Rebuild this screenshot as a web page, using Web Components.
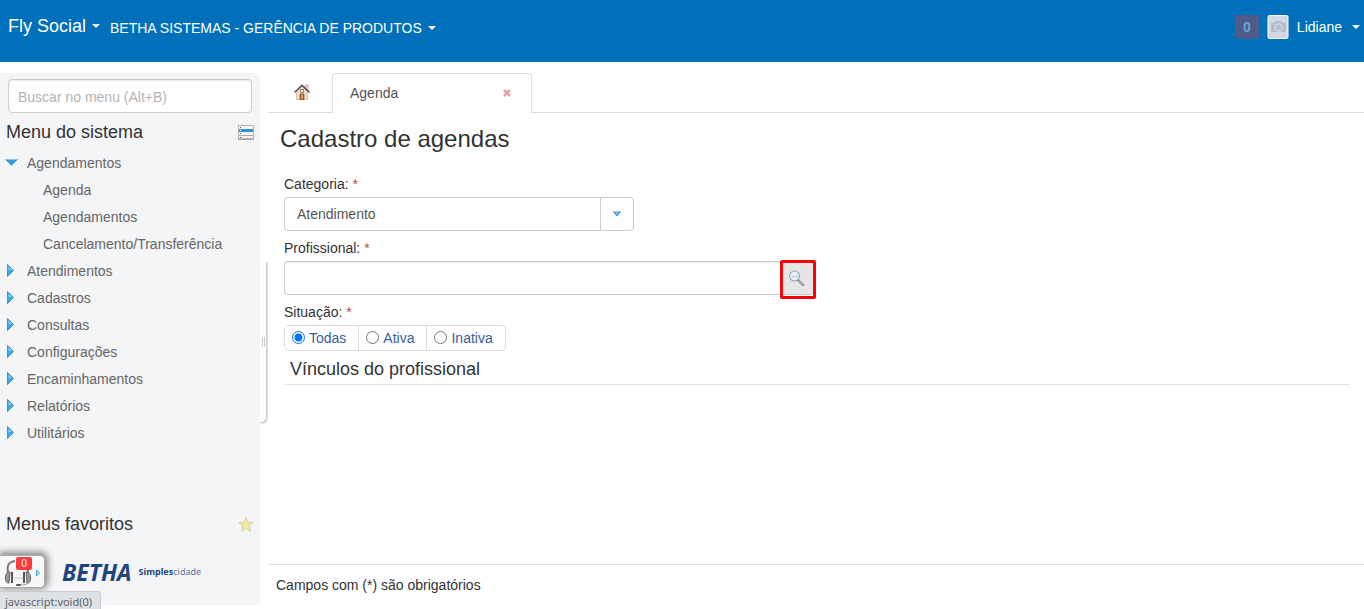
<!DOCTYPE html>
<html lang="pt-BR">
<head>
<meta charset="utf-8">
<title>Fly Social - Cadastro de agendas</title>
<style>
  body { margin: 0; background: #fff; color: #333; font: 14px/20px "Liberation Sans", Arial, sans-serif; }
</style>
</head>
<body>
<fly-app></fly-app>
<script>
const define = (name, markup) => customElements.define(name, class extends HTMLElement {
  constructor() {
    super();
    this.attachShadow({ mode: 'open' }).innerHTML = markup;
  }
});

define('app-header', `
<style>
  :host { display: flex; align-items: flex-start; height: 62px; box-sizing: border-box; padding: 14px 4px 0 8px; background: #0070ba; color: #fff; }
  button { display: flex; align-items: center; gap: 6px; border: 0; padding: 0; background: none; color: inherit; font: 14px/26px "Liberation Sans", Arial, sans-serif; white-space: nowrap; }
  .caret { border: 4px solid transparent; border-top-color: #fff; border-bottom: 0; }
  .brand { font-size: 18px; line-height: 24px; margin-right: 10px; }
  .entity { line-height: 28px; }
  .user { display: flex; align-items: center; margin-left: auto; }
  .count { width: 24px; line-height: 24px; border-radius: 3px; margin-right: 8px; background: #505a8b; color: #69a5d5; text-align: center; font-weight: bold; }
  .user svg { margin-right: 8px; }
  .user button { gap: 10px; }
</style>
<button class="brand">Fly Social <span class="caret"></span></button>
<button class="entity">BETHA SISTEMAS - GERÊNCIA DE PRODUTOS <span class="caret"></span></button>
<div class="user">
  <span class="count">0</span>
  <svg width="22" height="24" viewBox="0 0 22 24"><rect x="1" y=".5" width="20" height="23" rx="1.500" fill="#d3d9e4" stroke="#fff"/><path d="M4 8h3l2-2h5l2 2h3v9H4z" fill="#b4bdc9"/><circle cx="11.500" cy="12.500" r="3.500" fill="#b4bdc9" stroke="#d3d9e4" stroke-width="1.300"/></svg>
  <button>Lidiane <span class="caret"></span></button>
</div>`);

define('menu-item', `
<style>
  :host { display: block; }
  a { display: flex; align-items: center; height: 27px; padding-left: 5px; color: #666; text-decoration: none; white-space: nowrap; }
  svg { width: 14px; height: 14px; margin-right: 8px; }
  .down, :host([open]) .right { display: none; }
  :host([open]) .down { display: block; }
  :host([leaf]) svg { display: none; }
  :host([leaf]) a { padding-left: 43px; }
</style>
<a href="#">
  <svg class="right" viewBox="0 0 14 14"><path d="M2.500 .5v12l6-6z" fill="#3fa9e8" stroke="#3f92d2"/><path d="M3.500 2.500v3.500h3.500z" fill="#8bcaf2"/></svg>
  <svg class="down" viewBox="0 0 14 14"><path d="M.5 3.500h12l-6 6z" fill="#3f9be0" stroke="#4ba8e6"/><path d="M1 3.500h11" stroke="#8bcbf5"/></svg>
  <slot></slot>
</a>`);

define('support-widget', `
<style>
  :host { display: block; width: 46px; height: 33px; }
  button { position: relative; display: block; width: 45px; height: 33px; padding: 0; border: 1px solid #aaa; border-left: 0; border-radius: 0 5px 5px 0; background: #f8f8f8; box-shadow: 1px -1px 7px 2px #888; }
  svg { display: block; }
  .badge { position: absolute; left: 16px; top: 1px; width: 16px; border-radius: 2px; background: #fb3b41; color: #fff; font: 10px/13px "Open Sans", sans-serif; }
</style>
<button aria-label="Atendimento">
  <svg width="44" height="31" viewBox="0 0 44 31"><path d="M8 17C7 10 8 6 15 5M28 17c0-3 0-6-2-9" fill="none" stroke="#777" stroke-width="2"/><path d="M10 16c-6-1-6 12-1 11zM26 16c6-1 6 12 1 11z" fill="#999" stroke="#666"/><path d="M11 16h2v11h-2zM23 16h2v11h-2z" fill="#555"/><path d="M29 26c-2 3-6 3-9 3" fill="none" stroke="#999"/><rect x="16" y="28" width="5" height="2" rx="1" fill="#555"/><path d="M14 22h9" stroke="#ddd" stroke-width="2"/><path d="M36.500 14v6l3-3z" fill="#b8e0f7" stroke="#45a4dd"/></svg>
  <span class="badge">0</span>
</button>`);

define('side-menu', `
<style>
  :host { position: relative; display: flex; flex-direction: column; width: 260px; flex: none; box-sizing: border-box; padding-top: 6px; border-radius: 0 4px 4px 0; background: #f3f5f7; }
  input { display: block; height: 34px; box-sizing: border-box; margin: 0 8px 7px; padding: 2px 9px 0; border: 1px solid #ccc; border-radius: 4px; background: #fff; box-shadow: inset 0 1px 1px #00000014; font: 14px/20px "Liberation Sans", Arial, sans-serif; }
  input::placeholder { color: #b3b3b3; opacity: 1; }
  .head { display: flex; justify-content: space-between; align-items: center; height: 24px; padding: 0 6px; }
  h2 { margin: 0; font-size: 18px; line-height: 24px; font-weight: normal; }
  nav { margin-top: 5px; }
  .favorites { margin-top: auto; }
  .logo { display: flex; align-items: center; gap: 7px; height: 28px; margin: 22px 0 19px 62px; color: #1f457f; font: italic bold 23px/28px "Noto Sans", sans-serif; }
  .logo small { font: 9px/12px "Noto Sans", sans-serif; color: #5a74a0; }
  .logo b { color: #1f457f; }
  .grip { position: absolute; left: 260px; top: 189px; width: 7px; height: 161px; box-sizing: border-box; border-right: 1px solid #ccc; border-bottom: 1px solid #ccc; border-radius: 0 0 6px 0; background: #fdfdfd; box-shadow: 1px 1px 1px #ddd; display: grid; place-items: center; }
  .grip::before { content: ""; width: 1px; height: 10px; border: solid #ccc; border-width: 0 1px; }
</style>
<input type="search" placeholder="Buscar no menu (Alt+B)" aria-label="Buscar no menu">
<div class="head"><h2>Menu do sistema</h2>
  <svg width="16" height="16" viewBox="0 0 16 16"><rect x=".5" y="1.500" width="15" height="13" fill="#f5f5f5" stroke="#b5b5b5"/><rect x="1" y="5" width="14" height="3" fill="#388fd7"/><path d="M1 11.500h14M0 15.500h16" stroke="#aaa"/><path d="M2 3.500h1M2 9.500h1M2 13.500h1" stroke="#555"/><path d="M2 6.500h1" stroke="#fff"/></svg>
</div>
<nav>
  <menu-item open>Agendamentos</menu-item>
  <menu-item leaf>Agenda</menu-item>
  <menu-item leaf>Agendamentos</menu-item>
  <menu-item leaf>Cancelamento/Transferência</menu-item>
  <menu-item>Atendimentos</menu-item>
  <menu-item>Cadastros</menu-item>
  <menu-item>Consultas</menu-item>
  <menu-item>Configurações</menu-item>
  <menu-item>Encaminhamentos</menu-item>
  <menu-item>Relatórios</menu-item>
  <menu-item>Utilitários</menu-item>
</nav>
<div class="head favorites"><h2>Menus favoritos</h2>
  <svg width="16" height="16" viewBox="0 0 16 16"><path d="M8 1.300l2 4.900 5.200.4-4 3.400 1.300 5.200L8 12.400l-4.500 2.800L4.800 10l-4-3.400L6 6.200z" fill="#f0e9a8" stroke="#dad2a0"/></svg>
</div>
<div class="logo">BETHA <small><b>Simples</b>cidade</small></div>
<div class="grip"></div>`);

define('tab-bar', `
<style>
  :host { display: flex; height: 40px; box-sizing: border-box; border-bottom: 1px solid #ddd; }
  .home { width: 64px; padding: 11px 0 0 26px; box-sizing: border-box; }
  .tab { display: flex; align-items: center; justify-content: space-between; width: 200px; height: 40px; box-sizing: border-box; padding: 0 20px 1px 17px; border: 1px solid #ddd; border-bottom: 0; border-radius: 4px 4px 0 0; background: #fff; }
  .tab a { color: #555; text-decoration: none; }
  button { display: block; padding: 0; border: 0; background: none; }
  svg { display: block; }
</style>
<a class="home" href="#" aria-label="Início"><svg width="16" height="16" viewBox="0 0 16 16"><path d="M11 1h3v5h-3z" fill="#ead7c5" stroke="#a46f54" stroke-width=".5"/><path d="M2.500 8L8 2.500 13.500 8v8h-11z" fill="#f1dfca" stroke="#c4a890" stroke-width=".6"/><path d="M.5 8.500L8 1.200l7.500 7.300" fill="none" stroke="#51444a" stroke-width="1.400"/><path d="M6.500 5.500h3v3h-3z" fill="#fff" stroke="#756258" stroke-width=".8"/><path d="M6 10h4v6H6z" fill="#b5652f" stroke="#7c4327" stroke-width=".6"/><path d="M8 11v4" stroke="#f4d6a4"/></svg></a>
<div class="tab"><a href="#">Agenda</a>
  <button aria-label="Fechar"><svg width="8" height="8" viewBox="0 0 8 8"><path d="M1 1l6 6M7 1L1 7" stroke="#e5a2a5" stroke-width="2.600"/></svg></button>
</div>`);

define('agenda-form', `
<style>
  :host { display: block; padding: 13px 14px 0 16px; }
  h1 { margin: 0 0 22px -4px; font-size: 24px; line-height: 26px; font-weight: normal; }
  label, legend { display: block; padding: 0; margin-bottom: 3px; line-height: 20px; }
  i { font-style: normal; color: #b94a48; }
  .field { margin-bottom: 7px; }
  .select { display: grid; grid-template-columns: 1fr 34px; width: 350px; }
  select, input[type=text] { box-sizing: border-box; height: 34px; margin: 0; border: 1px solid #ccc; border-radius: 4px; background: #fff; color: #555; font: 14px/20px "Liberation Sans", Arial, sans-serif; }
  select { appearance: none; grid-area: 1 / 1 / 2 / 3; width: 100%; padding: 0 44px 0 12px; }
  .arrow { grid-area: 1 / 2; display: grid; place-items: center; border-left: 1px solid #ccc; margin: 1px 0; padding-right: 2px; pointer-events: none; }
  .lookup { display: flex; width: 530px; }
  .lookup input { flex: 1; min-width: 0; border-radius: 4px 0 0 4px; border-right: 0; padding: 0 12px; box-shadow: inset 0 1px 1px #00000014; }
  .lookup button { position: relative; display: grid; place-items: center; width: 34px; height: 34px; padding: 0 2px 0 0; border: 1px solid #ccc; border-radius: 0 4px 4px 0; background: #e6e6e6; }
  .lookup button::after { content: ""; position: absolute; inset: -2px -3px -5px -1px; border: 3px solid #fc0008; border-radius: 2px; }
  fieldset { margin: 0; padding: 0; border: 0; }
  .radios { display: inline-flex; vertical-align: top; border: 1px solid #ddd; border-radius: 4px; }
  .radios label { display: flex; align-items: center; gap: 4px; height: 24px; margin: 0; padding: 0 12px 0 7px; color: #36609a; }
  .radios label + label { border-left: 1px solid #ddd; }
  .radios input { width: 13px; height: 13px; margin: 0 0 2px; }
  h2 { margin: 0; padding: 6px 6px 3px; border-bottom: 1px solid #e5e5e5; font-size: 18px; line-height: 24px; font-weight: normal; }
</style>
<h1>Cadastro de agendas</h1>
<form>
  <div class="field">
    <label for="category">Categoria: <i>*</i></label>
    <div class="select"><select id="category"><option>Atendimento</option></select>
      <span class="arrow"><svg width="8" height="6" viewBox="0 0 8 6"><path d="M.8 1h6.400L4 4.500z" fill="#9fd4f5" stroke="#3f98d8" stroke-width="1.200"/></svg></span></div>
  </div>
  <div class="field">
    <label for="professional">Profissional: <i>*</i></label>
    <div class="lookup"><input type="text" id="professional">
      <button type="button" aria-label="Pesquisar"><svg width="18" height="18" viewBox="0 0 18 18"><path d="M11 11l5 5" stroke="#888" stroke-width="2.400" stroke-linecap="round"/><path d="M12 12l3.500 3.500" stroke="#ccc"/><circle cx="7.500" cy="7" r="5" fill="#e7f3fc" stroke="#a2a9b0" stroke-width="1.200"/><path d="M4 7.500h7" stroke="#bddcf4" stroke-width="2"/></svg></button></div>
  </div>
  <fieldset>
    <legend>Situação: <i>*</i></legend>
    <div class="radios">
      <label><input type="radio" name="status" checked>Todas</label>
      <label><input type="radio" name="status">Ativa</label>
      <label><input type="radio" name="status">Inativa</label>
    </div>
  </fieldset>
  <h2>Vínculos do profissional</h2>
</form>`);

define('fly-app', `
<style>
  :host { display: flex; flex-direction: column; min-height: 100vh; box-sizing: border-box; position: relative; }
  .body { flex: 1; display: flex; gap: 8px; padding-top: 11px; }
  side-menu { margin-bottom: 4px; }
  main { flex: 1; min-width: 0; display: flex; flex-direction: column; }
  footer { margin-top: auto; padding: 10px 8px 14px; border-top: 1px solid #ddd; }
  .dock { position: absolute; left: 0; bottom: 0; width: 102px; overflow: hidden; padding-top: 16px; }
  .status { position: relative; width: 101px; height: 18px; box-sizing: border-box; margin-top: 3px; padding-left: 5px; border: solid #c8cacf; border-width: 1px 1px 0 0; border-radius: 0 4px 0 0; background: #dee1e6; color: #5f6368; font: 11px/20px "Noto Sans", sans-serif; white-space: nowrap; }
</style>
<app-header></app-header>
<div class="body">
  <side-menu></side-menu>
  <main>
    <tab-bar></tab-bar>
    <agenda-form></agenda-form>
    <footer>Campos com (*) são obrigatórios</footer>
  </main>
</div>
<div class="dock">
  <support-widget></support-widget>
  <div class="status">javascript:void(0)</div>
</div>`);
</script>
</body>
</html>
